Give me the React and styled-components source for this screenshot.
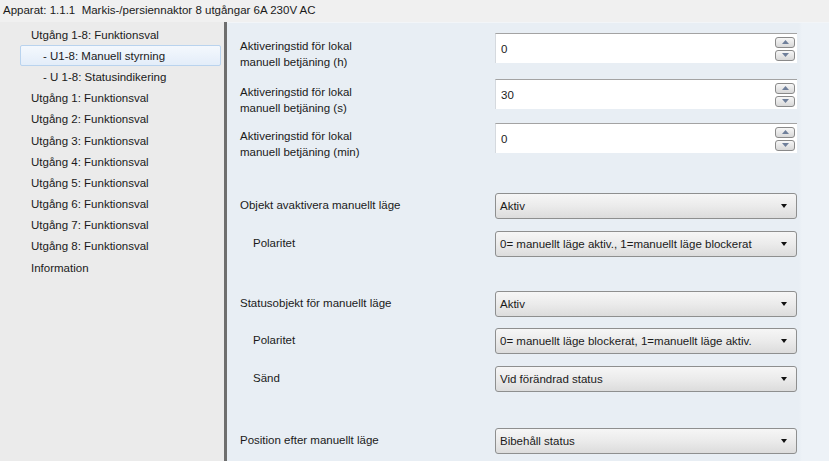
import React from "react";
import styled, { createGlobalStyle } from "styled-components";

const GlobalStyle = createGlobalStyle`
  html, body { margin: 0; padding: 0; }
  body {
    font-family: Tahoma, "Liberation Sans", "DejaVu Sans", sans-serif;
    font-size: 11.5px;
    color: #1a1a1a;
    background: #f0f0f0;
  }
`;

const Window = styled.div`
  width: 829px;
  height: 461px;
  display: flex;
  flex-direction: column;
  overflow: hidden;
  background: #f0f0f0;
`;

const TitleBar = styled.div`
  height: 22px;
  flex: none;
  display: flex;
  align-items: center;
  padding-left: 3px;
  padding-bottom: 2px;
  box-sizing: border-box;
  white-space: pre;
`;

const Body = styled.div`
  flex: 1;
  display: flex;
  min-height: 0;
`;

const Tree = styled.ul`
  width: 224px;
  flex: none;
  margin: 0;
  padding: 2px 0 0 0;
  list-style: none;
  background: #ebebeb;
`;

const TreeItem = styled.li`
  height: 21.2px;
  display: flex;
  align-items: center;
  margin: 0 3px 0 ${(p) => (p.$selected ? 20 : 21)}px;
  padding-left: ${(p) => (p.$selected ? 22 : p.$indent ? 21 : 9)}px;
  box-sizing: border-box;
  border: 1px solid ${(p) => (p.$selected ? "#b9d3ee" : "transparent")};
  border-radius: 2px;
  background: ${(p) =>
    p.$selected ? "linear-gradient(#f4f8fd, #e3edf9)" : "transparent"};
`;

const Divider = styled.div`
  width: 3px;
  flex: none;
  background: #6e6e6e;
`;

const Panel = styled.div`
  flex: 1;
  background: linear-gradient(to right, #e8eef4 0, #e8eef4 572px, #edf2f7 575px);
  border-top: 1px solid #f2f5f8;
  padding: 10px 0 0 13px;
  box-sizing: border-box;
  display: flex;
  flex-direction: column;
`;

const Row = styled.div`
  display: flex;
  align-items: ${(p) => (p.$tall ? "flex-start" : "center")};
  height: ${(p) => p.$h}px;
  margin-top: ${(p) => p.$top || 0}px;
`;

const Label = styled.div`
  width: ${(p) => (p.$indent ? 242 : 255)}px;
  padding-left: ${(p) => (p.$indent ? 13 : 0)}px;
  padding-top: ${(p) => (p.$tall ? 6 : 0)}px;
  line-height: 15.5px;
  flex: none;
`;

const TextField = styled.div`
  width: 302px;
  height: 30px;
  box-sizing: border-box;
  background: #ffffff;
  border-top: 1px solid #a3a3a3;
  border-left: 1px solid #d5d9de;
  display: flex;
  align-items: center;
  justify-content: space-between;
  padding: 0 2px 0 5px;
`;

const Spinner = styled.div`
  display: flex;
  flex-direction: column;
  gap: 2px;
`;

const SpinButton = styled.div`
  width: 20px;
  height: 11px;
  box-sizing: border-box;
  border: 1px solid #8a8a8a;
  border-radius: 3px;
  background: linear-gradient(#f7f7f7, #d8d8d8);
  display: flex;
  align-items: center;
  justify-content: center;
`;

const Select = styled.div`
  width: 302px;
  height: 26px;
  box-sizing: border-box;
  border: 1px solid #8e8f8f;
  border-radius: 3px;
  background: linear-gradient(#f6f6f6 0%, #ebebeb 50%, #dcdcdc 100%);
  display: flex;
  align-items: center;
  justify-content: space-between;
  padding: 0 9px 0 4px;
`;

const Arrow = styled.span`
  width: 0;
  height: 0;
  border-left: 3.5px solid transparent;
  border-right: 3.5px solid transparent;
  border-top: 4px solid #111;
`;

function Tri({ up }) {
  return (
    <svg width="7" height="4" viewBox="0 0 7 4">
      <path d={up ? "M0 4 L3.5 0 L7 4 Z" : "M0 0 L7 0 L3.5 4 Z"} fill="#6f7f9a" />
    </svg>
  );
}

function NumberField({ value }) {
  return (
    <TextField>
      <span>{value}</span>
      <Spinner>
        <SpinButton>
          <Tri up />
        </SpinButton>
        <SpinButton>
          <Tri />
        </SpinButton>
      </Spinner>
    </TextField>
  );
}

function Dropdown({ value }) {
  return (
    <Select>
      <span>{value}</span>
      <Arrow />
    </Select>
  );
}

const tree = [
  { text: "Utgång 1-8: Funktionsval" },
  { text: "- U1-8: Manuell styrning", indent: true, selected: true },
  { text: "- U 1-8: Statusindikering", indent: true },
  { text: "Utgång 1: Funktionsval" },
  { text: "Utgång 2: Funktionsval" },
  { text: "Utgång 3: Funktionsval" },
  { text: "Utgång 4: Funktionsval" },
  { text: "Utgång 5: Funktionsval" },
  { text: "Utgång 6: Funktionsval" },
  { text: "Utgång 7: Funktionsval" },
  { text: "Utgång 8: Funktionsval" },
  { text: "Information" },
];

const timeRows = [
  { unit: "h", value: "0", top: 0 },
  { unit: "s", value: "30", top: 16 },
  { unit: "min", value: "0", top: 14 },
];

export default function App() {
  return (
    <>
      <GlobalStyle />
      <Window>
        <TitleBar>Apparat: 1.1.1  Markis-/persiennaktor 8 utgångar 6A 230V AC</TitleBar>
        <Body>
          <Tree>
            {tree.map((t) => (
              <TreeItem key={t.text} $indent={t.indent} $selected={t.selected}>
                {t.text}
              </TreeItem>
            ))}
          </Tree>
          <Divider />
          <Panel>
            {timeRows.map((r) => (
              <Row key={r.unit} $h={30} $top={r.top} $tall>
                <Label $tall>
                  Aktiveringstid för lokal
                  <br />
                  manuell betjäning ({r.unit})
                </Label>
                <NumberField value={r.value} />
              </Row>
            ))}
            <Row $h={26} $top={40}>
              <Label>Objekt avaktivera manuellt läge</Label>
              <Dropdown value="Aktiv" />
            </Row>
            <Row $h={26} $top={12}>
              <Label $indent>Polaritet</Label>
              <Dropdown value="0= manuellt läge aktiv., 1=manuellt läge blockerat" />
            </Row>
            <Row $h={26} $top={34}>
              <Label>Statusobjekt för manuellt läge</Label>
              <Dropdown value="Aktiv" />
            </Row>
            <Row $h={26} $top={11}>
              <Label $indent>Polaritet</Label>
              <Dropdown value="0= manuellt läge blockerat, 1=manuellt läge aktiv." />
            </Row>
            <Row $h={26} $top={12}>
              <Label $indent>Sänd</Label>
              <Dropdown value="Vid förändrad status" />
            </Row>
            <Row $h={26} $top={36}>
              <Label>Position efter manuellt läge</Label>
              <Dropdown value="Bibehåll status" />
            </Row>
          </Panel>
        </Body>
      </Window>
    </>
  );
}
